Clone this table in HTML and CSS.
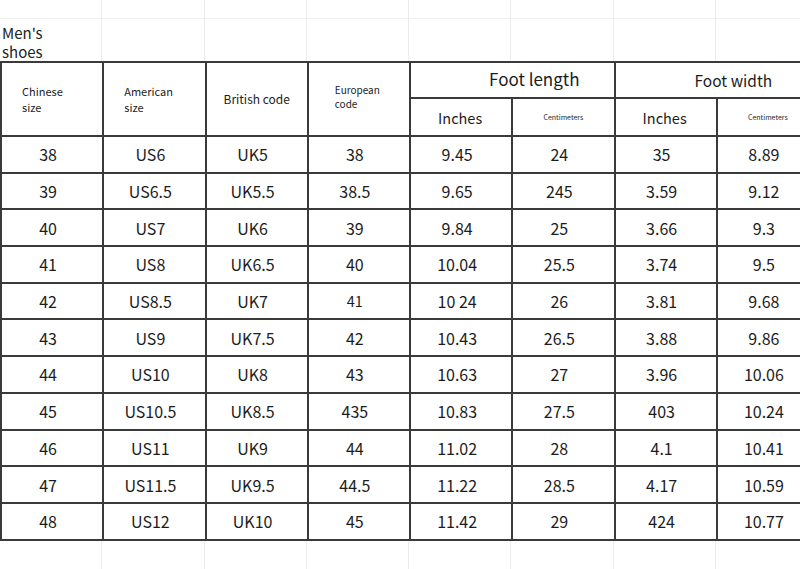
FILE: index.html
```html
<!DOCTYPE html>
<html>
<head>
<meta charset="utf-8">
<link rel="stylesheet" href="styles.css">
</head>
<body>
<div class="sheet">
  <div class="top">
    <div class="cell r1"></div><div class="cell r1"></div><div class="cell r1"></div><div class="cell r1"></div>
    <div class="cell r1"></div><div class="cell r1"></div><div class="cell r1"></div><div class="cell r1"></div>
    <div class="cell title">Men's<br>shoes</div><div class="cell"></div><div class="cell"></div><div class="cell"></div>
    <div class="cell"></div><div class="cell"></div><div class="cell"></div><div class="cell"></div>
  </div>
  <table class="sizes">
    <colgroup>
      <col class="c"><col class="c"><col class="c"><col class="c"><col class="c"><col class="c"><col class="c"><col class="c">
    </colgroup>
    <thead>
      <tr class="h1">
        <th rowspan="2" class="hl hs1">Chinese<br>size</th>
        <th rowspan="2" class="hl hs2">American<br>size</th>
        <th rowspan="2" class="hl hs3">British code</th>
        <th rowspan="2" class="hl hs4">European<br>code</th>
        <th colspan="2" class="big len">Foot length</th>
        <th colspan="2" class="big wid">Foot width</th>
      </tr>
      <tr class="h2">
        <th class="inch">Inches</th>
        <th class="cm">Centimeters</th>
        <th class="inch">Inches</th>
        <th class="cm">Centimeters</th>
      </tr>
    </thead>
    <tbody>
      <tr><td>38</td><td>US6</td><td>UK5</td><td>38</td><td>9.45</td><td>24</td><td>35</td><td>8.89</td></tr>
      <tr><td>39</td><td>US6.5</td><td>UK5.5</td><td>38.5</td><td>9.65</td><td>245</td><td>3.59</td><td>9.12</td></tr>
      <tr><td>40</td><td>US7</td><td>UK6</td><td>39</td><td>9.84</td><td>25</td><td>3.66</td><td>9.3</td></tr>
      <tr><td>41</td><td>US8</td><td>UK6.5</td><td>40</td><td>10.04</td><td>25.5</td><td>3.74</td><td>9.5</td></tr>
      <tr><td>42</td><td>US8.5</td><td>UK7</td><td class="sm">41</td><td>10 24</td><td>26</td><td>3.81</td><td>9.68</td></tr>
      <tr><td>43</td><td>US9</td><td>UK7.5</td><td>42</td><td>10.43</td><td>26.5</td><td>3.88</td><td>9.86</td></tr>
      <tr><td>44</td><td>US10</td><td>UK8</td><td>43</td><td>10.63</td><td>27</td><td>3.96</td><td>10.06</td></tr>
      <tr><td>45</td><td>US10.5</td><td>UK8.5</td><td>435</td><td>10.83</td><td>27.5</td><td>403</td><td>10.24</td></tr>
      <tr><td>46</td><td>US11</td><td>UK9</td><td>44</td><td>11.02</td><td>28</td><td>4.1</td><td>10.41</td></tr>
      <tr><td>47</td><td>US11.5</td><td>UK9.5</td><td>44.5</td><td>11.22</td><td>28.5</td><td>4.17</td><td>10.59</td></tr>
      <tr><td>48</td><td>US12</td><td>UK10</td><td>45</td><td>11.42</td><td>29</td><td>424</td><td>10.77</td></tr>
    </tbody>
  </table>
  <div class="bottom">
    <div class="cell"></div><div class="cell"></div><div class="cell"></div><div class="cell"></div>
    <div class="cell"></div><div class="cell"></div><div class="cell"></div><div class="cell"></div>
  </div>
</div>
</body>
</html>
```
FILE: styles.css
```css
html, body {
  margin: 0;
  padding: 0;
  background: #ffffff;
  overflow: hidden;
}
body {
  width: 800px;
  height: 569px;
  font-family: "Noto Sans CJK SC", "Noto Sans", sans-serif;
  color: #1c1c1c;
}
.sheet {
  width: 822px;
}
.top {
  display: grid;
  grid-template-columns: repeat(8, 102.3px);
  grid-template-rows: 19px 42px;
}
.cell {
  border-right: 1px solid #ececec;
}
.r1 {
  border-bottom: 1px solid #f0f0f0;
}
.title {
  font-size: 15px;
  line-height: 19px;
  padding-left: 2px;
  padding-top: 4px;
  color: #222;
}
.sizes {
  border-collapse: collapse;
  table-layout: fixed;
  width: 818px;
}
.sizes col.c {
  width: 102.25px;
}
.sizes th, .sizes td {
  border: 2px solid #3a3a3a;
  padding: 0;
  font-weight: normal;
  color: #1c1c1c;
}
.sizes td {
  height: 34.7px;
  font-size: 16px;
  text-align: center;
  line-height: 20px;
  padding-right: 8px;
}
.sizes td.sm {
  font-size: 14.5px;
}
.sizes .h1 th {
  height: 31px;
}
.sizes .h2 th {
  height: 36px;
}
.sizes .hl {
  text-align: left;
  vertical-align: middle;
}
.sizes .hs1 { padding-left: 20px; font-size: 11px; line-height: 16px; }
.sizes .hs2 { padding-left: 20px; font-size: 11px; line-height: 16px; }
.sizes .hs3 { padding-left: 17px; font-size: 12px; line-height: 16px; }
.sizes .hs4 { padding-left: 26px; font-size: 10px; line-height: 14px; padding-bottom: 4px; }
.sizes .big {
  text-align: left;
  line-height: 22px;
}
.sizes .len { font-size: 17px; padding-left: 78px; padding-bottom: 3px; }
.sizes .wid { font-size: 15.5px; padding-left: 79px; padding-top: 1px; padding-bottom: 2px; }
.sizes .inch {
  font-size: 14.5px;
  text-align: center;
  padding-right: 2px;
}
.sizes .cm {
  font-size: 7px;
  text-align: center;
}
.bottom {
  display: grid;
  grid-template-columns: repeat(8, 102.3px);
  height: 40px;
}
```
